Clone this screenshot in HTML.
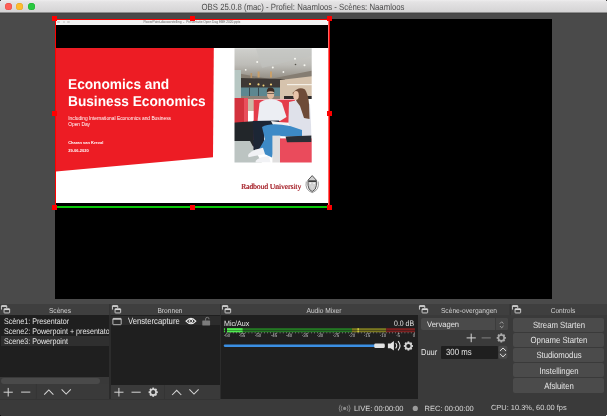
<!DOCTYPE html>
<html><head><meta charset="utf-8">
<style>
*{box-sizing:border-box;margin:0;padding:0}
html,body{width:607px;height:416px;overflow:hidden;background:#4a4a4a;font-family:"Liberation Sans",sans-serif;}
#root{position:absolute;left:0;top:0;width:607px;height:416px;will-change:transform}
.r{position:absolute}
.t{position:absolute;white-space:pre;text-rendering:geometricPrecision}
.h{text-rendering:optimizeLegibility}
</style></head><body><div id="root">
<div class="r" style="left:0px;top:0px;width:607px;height:12.7px;background:linear-gradient(#eeedee,#e4e3e4 15%,#d3d2d3);"></div>
<div class="r" style="left:0px;top:12.4px;width:607px;height:0.6px;background:#8e8e8e;"></div>
<div class="r" style="left:0px;top:13.0px;width:607px;height:0.8px;background:#454545;"></div>
<div class="r" style="left:4.800000000000001px;top:2.8px;width:7.2px;height:7.2px;border-radius:50%;background:#fe5f57;box-shadow:inset 0 0 0 0.4px #e0443e"></div>
<div class="r" style="left:16.2px;top:2.8px;width:7.2px;height:7.2px;border-radius:50%;background:#febc2e;box-shadow:inset 0 0 0 0.4px #dea123"></div>
<div class="r" style="left:27.9px;top:2.8px;width:7.2px;height:7.2px;border-radius:50%;background:#28c840;box-shadow:inset 0 0 0 0.4px #1aab29"></div>
<div class="t" style="left:303.00px;top:1.74px;font-size:9.048px;line-height:10.858px;color:#4b4b4b;font-weight:400;font-family:'Liberation Sans';transform-origin:50% 0;transform:translateX(-50%) scaleX(0.8621);">OBS 25.0.8 (mac) - Profiel: Naamloos - Scènes: Naamloos</div>
<div class="r" style="left:55px;top:19px;width:497px;height:280px;background:#000;"></div>
<div class="r" style="left:56px;top:19.6px;width:272px;height:5px;background:#f3f3f3;"></div>
<div class="r" style="left:57.35px;top:20.7px;width:2.5px;height:2.5px;border-radius:50%;background:#d2d2d2"></div>
<div class="r" style="left:62.55px;top:20.7px;width:2.5px;height:2.5px;border-radius:50%;background:#d2d2d2"></div>
<div class="r" style="left:67.15px;top:20.7px;width:2.5px;height:2.5px;border-radius:50%;background:#d2d2d2"></div>
<div class="t h" style="left:143.40px;top:21.25px;font-size:3.22px;line-height:3.864px;color:#6a6a6a;font-weight:400;font-family:'Liberation Sans';">PowerPoint-diavoorstelling  -  Presentatie Open Dag EBE 2020.pptx</div>
<div class="r" style="left:56px;top:47.9px;width:272px;height:155.1px;background:#fff;"></div>
<svg class="r" style="left:56px;top:47.9px" width="272" height="155" viewBox="0 0 272 155">
<polygon points="0,0 157.8,0 157.0,109.2 0,123.6" fill="#ed1c24"/></svg>
<div class="t" style="left:68.40px;top:77.01px;font-size:14.248px;line-height:17.098px;color:#fff;font-weight:700;font-family:'Liberation Sans';transform-origin:0 0;transform:scaleX(0.9615);">Economics and</div>
<div class="t" style="left:68.40px;top:93.81px;font-size:14.248px;line-height:17.098px;color:#fff;font-weight:700;font-family:'Liberation Sans';transform-origin:0 0;transform:scaleX(0.9615);">Business Economics</div>
<div class="t h" style="left:68.20px;top:116.01px;font-size:4.85px;line-height:5.82px;color:#fff;font-weight:400;font-family:'Liberation Sans';">Including International Economics and Business</div>
<div class="t h" style="left:68.20px;top:121.81px;font-size:4.85px;line-height:5.82px;color:#fff;font-weight:400;font-family:'Liberation Sans';">Open Day</div>
<div class="t h" style="left:68.20px;top:141.41px;font-size:4.0px;line-height:4.8px;color:#fff;font-weight:700;font-family:'Liberation Sans';">Charan van Kreval</div>
<div class="t h" style="left:68.20px;top:148.51px;font-size:4.0px;line-height:4.8px;color:#fff;font-weight:700;font-family:'Liberation Sans';">29-06-2020</div>
<svg class="r" style="left:0;top:0" width="607" height="416" viewBox="0 0 607 416">
  <defs><filter id="bl" x="-10%" y="-10%" width="120%" height="120%"><feGaussianBlur stdDeviation="0.6"/></filter>
  <clipPath id="pc"><rect x="234.5" y="48.2" width="77.2" height="114.4"/></clipPath></defs>
  <g clip-path="url(#pc)"><g filter="url(#bl)">
  <!-- ceiling -->
  <defs><linearGradient id="ceil" x1="0" y1="0" x2="0" y2="1">
    <stop offset="0" stop-color="#d3d4d1"/><stop offset="0.55" stop-color="#bdbcb7"/><stop offset="1" stop-color="#8d877d"/></linearGradient></defs>
  <rect x="230" y="45" width="85" height="36" fill="url(#ceil)"/>
  <polygon points="255,45 315,45 315,55 262,68" fill="#c2c3bf" opacity="0.6"/>
  <polygon points="230,72 270,79 315,70 315,81 270,83 230,82" fill="#857d72"/>
  <circle cx="257.2" cy="61.9" r="1" fill="#f6f6f0"/><circle cx="295" cy="58.7" r="1" fill="#f6f6f0"/>
  <circle cx="304.5" cy="65.2" r="1" fill="#f6f6f0"/><circle cx="272.8" cy="67.6" r="1" fill="#f6f6f0"/>
  <circle cx="245.7" cy="69.8" r="0.9" fill="#f6f6f0"/><circle cx="283.4" cy="72" r="0.9" fill="#f6f6f0"/>
  <circle cx="295.5" cy="64.5" r="0.8" fill="#55524c"/>
  <rect x="257.6" y="71.5" width="2" height="6" fill="#c9a06a"/><rect x="270" y="71.5" width="2" height="6" fill="#c9a06a"/><rect x="250.5" y="73" width="1.6" height="5" fill="#b99466"/>
  <!-- dark band -->
  <polygon points="240,78 285,79 285,88 240,88" fill="#3d3934"/>
  <circle cx="250" cy="84" r="1.1" fill="#f2d27c"/><circle cx="258.5" cy="84.4" r="1.1" fill="#f2d27c"/>
  <circle cx="263.5" cy="85.5" r="1" fill="#f2d27c"/><circle cx="271" cy="84.5" r="1.1" fill="#f2d27c"/>
  <!-- windows -->
  <rect x="240" y="87.5" width="42" height="11" fill="#5d8790"/>
  <rect x="249" y="87.5" width="0.9" height="11" fill="#34434a"/><rect x="258" y="87.5" width="0.9" height="11" fill="#34434a"/><rect x="268" y="87.5" width="0.9" height="11" fill="#34434a"/>
  <rect x="240" y="96" width="42" height="3" fill="#8c8277"/>
  <!-- left column -->
  <rect x="230" y="70" width="11" height="30" fill="#b7c7c3"/>
  <!-- right beige wall -->
  <polygon points="280,80 315,76 315,99 280,99" fill="#d6c3ad"/>
  <rect x="287" y="84" width="28" height="1.2" fill="#f4efe6"/>
  <rect x="284" y="96" width="31" height="3" fill="#2e2b2b"/>
  <!-- left red chair -->
  <rect x="230" y="98" width="18" height="26" fill="#d3303c"/>
  <rect x="244" y="98" width="4" height="25" fill="#e9505c"/>
  <rect x="248" y="99" width="6" height="12" fill="#cbb9a6"/>
  <!-- dark floor under chair -->
  <polygon points="230,123 256,121 262,146 230,148" fill="#24262b"/>
  <!-- floor light -->
  <polygon points="230,141 250,141 262,163 230,163" fill="#bcc4c2"/>
  <!-- man's sofa back -->
  <rect x="253.7" y="99.6" width="41.5" height="23" fill="#e43d4b"/>
  <rect x="253.7" y="120" width="8" height="20" fill="#d8343f"/>
  <!-- man's shirt -->
  <path d="M257.5,121.6 L259.5,103 Q263,99.5 270.6,99 Q278,99.5 282,103 L286.5,117 L280,121 Z" fill="#eceef3"/>
  <!-- man's head -->
  <ellipse cx="270.6" cy="94.6" rx="3.6" ry="4.6" fill="#e0b89c"/>
  <path d="M266.8,92.2 Q266.6,87.6 270.6,87.6 Q274.6,87.6 274.4,92.2 Q270.6,90.4 266.8,92.2Z" fill="#3b2b22"/>
  <rect x="267.2" y="93.4" width="6.8" height="0.6" fill="#2a2a2a"/>
  <!-- man's pants -->
  <path d="M252.8,121 L279,120.6 L281,127 L265,131 L263,150 L253.5,150 Z" fill="#1f2536"/>
  <!-- woman's shirt -->
  <path d="M289,102 L300,99.6 L310,104 L311.5,135.6 L297,136 L288.4,124 Z" fill="#dfe1ea"/>
  <!-- woman's hair -->
  <path d="M292.5,93 Q299,85.6 305,89.5 Q308.5,95 309,104 L309.5,119 L304,118 L300,106 L297,102 Z" fill="#6e4c37"/>
  <ellipse cx="296" cy="95.5" rx="2.8" ry="4.4" fill="#e8c3aa"/>
  <!-- paper -->
  <polygon points="271,121 287,123 289,127 273,125" fill="#f2f2f2"/>
  <!-- jeans -->
  <path d="M262,127 Q270,122 290,126 L302,130 L302,137 L278,136 L272,157.5 L258,151 L265,139 Z" fill="#3d8ac6"/>
  <!-- sofa seat (white/gray) -->
  <rect x="272.4" y="135.6" width="8" height="28" fill="#e0dfdf"/>
  <!-- front red sofa -->
  <rect x="280" y="138.4" width="33" height="25" fill="#ea4c5c"/>
  <!-- laptop -->
  <polygon points="285.6,136.5 311.5,135.6 311.5,142 287,142.3" fill="#2a2d35"/>
  <!-- shoes -->
  <path d="M248,155 Q251,150 263,147.8 L265,154 L248.5,157.2 Z" fill="#f1f2f5"/>
  <path d="M255.6,161 Q258,157 269,156.3 L270.6,162.6 L255.6,162.6 Z" fill="#f1f2f5"/>
  </g></g>
</svg>

<div class="t" style="left:241.20px;top:181.60px;font-size:7.823px;line-height:9.387px;color:#a82830;font-weight:400;font-family:'Liberation Serif';transform-origin:0 0;transform:scaleX(0.9524);text-shadow:0.4px 0 0 #a82830;">Radboud University</div>
<svg class="r" style="left:0;top:0" width="607" height="416">
  <path d="M312.2,175.6 L316.4,180.2 L316.4,185.4 Q316.2,189.8 312.2,191.6 Q308.2,189.8 308,185.4 L308,180.2 Z" fill="#cfcfcf" stroke="#303030" stroke-width="0.8"/>
  <rect x="308.4" y="180.4" width="7.6" height="1.5" fill="#2e2e2e"/>
  <circle cx="310.3" cy="183.3" r="0.9" fill="#f4f4f4"/><circle cx="314.1" cy="183.3" r="0.9" fill="#f4f4f4"/>
  <path d="M310.6,185.5 L313.8,185.5 L312.2,189.5 Z" fill="#d8d8d8"/>
  <path d="M306.3,181.5 Q304.6,190 312.2,192.6 Q319.8,190 318.1,181.5" fill="none" stroke="#555" stroke-width="0.6"/>
</svg>
<div class="r" style="left:55px;top:19px;width:1px;height:188px;background:#ff0000;"></div>
<div class="r" style="left:327.6px;top:19px;width:2.4px;height:188px;background:linear-gradient(to right, #ffd0d0, #ff5050 30%, #ff0000 60%, #d80000);"></div>
<div class="r" style="left:55px;top:19px;width:275px;height:1px;background:#ff0000;"></div>
<div class="r" style="left:56px;top:206.3px;width:273px;height:1.5px;background:#08c808;"></div>
<div class="r" style="left:52.3px;top:16.4px;width:4.7px;height:4.7px;background:#ff0000;"></div>
<div class="r" style="left:52.3px;top:110.9px;width:4.7px;height:4.7px;background:#ff0000;"></div>
<div class="r" style="left:52.3px;top:204.9px;width:4.7px;height:4.7px;background:#ff0000;"></div>
<div class="r" style="left:190.1px;top:16.4px;width:4.7px;height:4.7px;background:#ff0000;"></div>
<div class="r" style="left:190.1px;top:204.9px;width:4.7px;height:4.7px;background:#ff0000;"></div>
<div class="r" style="left:327.4px;top:16.4px;width:4.7px;height:4.7px;background:#ff0000;"></div>
<div class="r" style="left:327.4px;top:110.9px;width:4.7px;height:4.7px;background:#ff0000;"></div>
<div class="r" style="left:327.4px;top:204.9px;width:4.7px;height:4.7px;background:#ff0000;"></div>
<svg width="0" height="0" style="position:absolute"><defs>
<g id="dockicon">
  <path d="M1.45,5.6 L1.45,2.1 Q1.45,1.65 1.9,1.65 L6.3,1.65 Q6.75,1.65 6.75,2.1 L6.75,4.2" fill="none" stroke="#d8d8d8" stroke-width="0.9"/>
  <rect x="1.45" y="1.65" width="5.3" height="1.2" fill="#d8d8d8"/>
  <rect x="4.05" y="4.75" width="5.6" height="4.2" rx="0.6" fill="#3e3e3e" stroke="#d8d8d8" stroke-width="0.9"/>
  <rect x="4.05" y="4.75" width="5.6" height="1.3" fill="#d8d8d8"/>
</g>
<g id="plus"><rect x="-4.6" y="-0.5" width="9.2" height="1" fill="#d4d4d4"/><rect x="-0.5" y="-4.3" width="1" height="8.6" fill="#d4d4d4"/></g>
<g id="minus"><rect x="-4.6" y="-0.5" width="9.2" height="1" fill="#d4d4d4"/></g>
<g id="up"><path d="M-4.6,2.8 L0,-1.9 L4.6,2.8" fill="none" stroke="#d4d4d4" stroke-width="1.05"/></g>
<g id="down"><path d="M-4.6,-2.8 L0,1.9 L4.6,-2.8" fill="none" stroke="#d4d4d4" stroke-width="1.05"/></g>
<g id="gear"><circle r="2.9" fill="none" stroke="#d4d4d4" stroke-width="1.6"/>
  <g fill="#d4d4d4"><rect x="-0.9" y="-4.6" width="1.8" height="2"/><rect x="-0.9" y="2.6" width="1.8" height="2"/><rect x="-4.6" y="-0.9" width="2" height="1.8"/><rect x="2.6" y="-0.9" width="2" height="1.8"/>
  <g transform="rotate(45)"><rect x="-0.9" y="-4.6" width="1.8" height="2"/><rect x="-0.9" y="2.6" width="1.8" height="2"/><rect x="-4.6" y="-0.9" width="2" height="1.8"/><rect x="2.6" y="-0.9" width="2" height="1.8"/></g></g></g>
</defs></svg>
<div class="r" style="left:0px;top:304px;width:607px;height:95.6px;background:#3a3a3a;"></div>
<div class="r" style="left:109.3px;top:304px;width:1.2px;height:11.4px;background:#353535;"></div>
<div class="r" style="left:220.0px;top:304px;width:1.2px;height:11.4px;background:#353535;"></div>
<div class="r" style="left:417.9px;top:304px;width:1.2px;height:11.4px;background:#353535;"></div>
<div class="r" style="left:509.6px;top:304px;width:1.2px;height:11.4px;background:#353535;"></div>
<div class="r" style="left:109.3px;top:315.4px;width:1.3px;height:84px;background:#2c2c2c;"></div>
<div class="r" style="left:219.7px;top:315.4px;width:1.4px;height:84px;background:#2c2c2c;"></div>
<div class="r" style="left:0px;top:304px;width:109.3px;height:95.6px;background:#3a3a3a;"></div>
<div class="r" style="left:0px;top:304px;width:109.3px;height:11.4px;background:#3f3f3f;"></div>
<svg class="r" style="left:0px;top:304px" width="12" height="11"><use href="#dockicon"/></svg>
<div class="t" style="left:59.80px;top:306.60px;font-size:7.182px;line-height:8.618px;color:#d0d0d0;font-weight:400;font-family:'Liberation Sans';transform-origin:50% 0;transform:translateX(-50%) scaleX(0.9259);">Scènes</div>
<div class="r" style="left:110.6px;top:304px;width:109.1px;height:95.6px;background:#3a3a3a;"></div>
<div class="r" style="left:110.6px;top:304px;width:109.1px;height:11.4px;background:#3f3f3f;"></div>
<svg class="r" style="left:110.6px;top:304px" width="12" height="11"><use href="#dockicon"/></svg>
<div class="t" style="left:170.30px;top:306.60px;font-size:7.182px;line-height:8.618px;color:#d0d0d0;font-weight:400;font-family:'Liberation Sans';transform-origin:50% 0;transform:translateX(-50%) scaleX(0.9259);">Bronnen</div>
<div class="r" style="left:221.1px;top:304px;width:196.7px;height:95.6px;background:#3a3a3a;"></div>
<div class="r" style="left:221.1px;top:304px;width:196.7px;height:11.4px;background:#3f3f3f;"></div>
<svg class="r" style="left:221.1px;top:304px" width="12" height="11"><use href="#dockicon"/></svg>
<div class="t" style="left:323.90px;top:306.60px;font-size:7.182px;line-height:8.618px;color:#d0d0d0;font-weight:400;font-family:'Liberation Sans';transform-origin:50% 0;transform:translateX(-50%) scaleX(0.9259);">Audio Mixer</div>
<div class="r" style="left:418.2px;top:304px;width:90.6px;height:95.6px;background:#3a3a3a;"></div>
<div class="r" style="left:418.2px;top:304px;width:90.6px;height:11.4px;background:#3f3f3f;"></div>
<svg class="r" style="left:418.2px;top:304px" width="12" height="11"><use href="#dockicon"/></svg>
<div class="t" style="left:468.80px;top:306.60px;font-size:7.182px;line-height:8.618px;color:#d0d0d0;font-weight:400;font-family:'Liberation Sans';transform-origin:50% 0;transform:translateX(-50%) scaleX(0.9259);">Scène-overgangen</div>
<div class="r" style="left:511.0px;top:304px;width:96.0px;height:95.6px;background:#3a3a3a;"></div>
<div class="r" style="left:511.0px;top:304px;width:96.0px;height:11.4px;background:#3f3f3f;"></div>
<svg class="r" style="left:511.0px;top:304px" width="12" height="11"><use href="#dockicon"/></svg>
<div class="t" style="left:563.30px;top:306.60px;font-size:7.182px;line-height:8.618px;color:#d0d0d0;font-weight:400;font-family:'Liberation Sans';transform-origin:50% 0;transform:translateX(-50%) scaleX(0.9259);">Controls</div>
<div class="r" style="left:0px;top:315.4px;width:109.3px;height:61.6px;background:#1f1f1f;"></div>
<div class="r" style="left:1.2px;top:335.9px;width:108.1px;height:9.9px;background:#2f2f2f;"></div>
<div class="t" style="left:3.90px;top:317.45px;font-size:8.294px;line-height:9.953px;color:#e6e6e6;font-weight:400;font-family:'Liberation Sans';transform-origin:0 0;transform:scaleX(0.8621);">Scène1: Presentator</div>
<div class="t" style="left:3.90px;top:327.25px;font-size:8.294px;line-height:9.953px;color:#e6e6e6;font-weight:400;font-family:'Liberation Sans';transform-origin:0 0;transform:scaleX(0.8621);width:122.26px;overflow:hidden;">Scene2: Powerpoint + presentator</div>
<div class="t" style="left:3.90px;top:337.05px;font-size:8.294px;line-height:9.953px;color:#e6e6e6;font-weight:400;font-family:'Liberation Sans';transform-origin:0 0;transform:scaleX(0.8621);">Scene3: Powerpoint</div>
<div class="r" style="left:0px;top:377px;width:109.3px;height:7.2px;background:#393939;"></div>
<div class="r" style="left:1.3px;top:377.6px;width:98.8px;height:6.0px;background:#4a4a4a;border-radius:3px;"></div>
<svg class="r" style="left:0;top:384px" width="109" height="15">
  <use href="#plus" x="8.2" y="8.2"/><use href="#minus" x="25.7" y="8.1"/>
  <rect x="35.9" y="0" width="0.7" height="14.7" fill="#333"/>
  <use href="#up" x="48.8" y="7.9"/><use href="#down" x="66.2" y="8.2"/>
</svg>
<div class="r" style="left:110.6px;top:315.4px;width:109.1px;height:69.5px;background:#1f1f1f;"></div>
<div class="r" style="left:110.6px;top:315.5px;width:109.1px;height:9.4px;background:#2c2c2c;"></div>
<svg class="r" style="left:110.6px;top:315.5px" width="110" height="10">
  <rect x="1.9" y="2.4" width="8.3" height="6.3" rx="0.6" fill="none" stroke="#d0d0d0" stroke-width="0.85"/>
  <rect x="1.9" y="2.4" width="8.3" height="1.3" fill="#d0d0d0"/>
  <path d="M75.0,5.1 Q80,-0.3 84.8,5.1 Q80,10.5 75.0,5.1Z" fill="none" stroke="#ececec" stroke-width="1.1"/>
  <circle cx="79.9" cy="5.1" r="1.75" fill="none" stroke="#ececec" stroke-width="1.0"/>
  <circle cx="79.9" cy="5.0" r="0.5" fill="#ececec"/>
  <path d="M94.6,4.8 L94.6,3.0 Q94.6,1.3 96.3,1.3 Q98.0,1.3 98.0,3.0 L98.0,3.3" fill="none" stroke="#7c7c7c" stroke-width="0.95"/>
  <rect x="91.3" y="4.5" width="7.8" height="5.0" rx="0.4" fill="#7c7c7c"/>
</svg>
<div class="t" style="left:128.30px;top:316.15px;font-size:8.932px;line-height:10.718px;color:#e6e6e6;font-weight:400;font-family:'Liberation Sans';transform-origin:0 0;transform:scaleX(0.8621);width:59.62px;overflow:hidden;">Venstercapture</div>
<svg class="r" style="left:110.6px;top:384.9px" width="110" height="15">
  <use href="#plus" x="7.9" y="7.2"/><use href="#minus" x="25.1" y="7.2"/><use href="#gear" x="42.2" y="7.2"/>
  <rect x="53.2" y="0" width="0.7" height="14.5" fill="#333"/>
  <use href="#up" x="65.7" y="7.2"/><use href="#down" x="83.0" y="7.2"/>
</svg>
<div class="r" style="left:221.1px;top:315.4px;width:196.7px;height:84.2px;background:#1f1f1f;"></div>
<div class="t" style="left:224.00px;top:318.79px;font-size:7.508px;line-height:9.009px;color:#e6e6e6;font-weight:400;font-family:'Liberation Sans';transform-origin:0 0;transform:scaleX(0.9524);">Mic/Aux</div>
<div class="t" style="left:414.30px;top:318.62px;font-size:8.004px;line-height:9.605px;color:#e6e6e6;font-weight:400;font-family:'Liberation Sans';transform-origin:100% 0;transform:translateX(-100%) scaleX(0.8621);">0.0 dB</div>
<svg class="r" style="left:0;top:0" width="607" height="416">
<rect x="227.0" y="328.2" width="124.87" height="2.0" fill="#237823"/><rect x="351.87" y="328.2" width="34.34" height="2.0" fill="#7b7820"/><rect x="386.21" y="328.2" width="28.69" height="2.0" fill="#7d2020"/><rect x="227.0" y="328.2" width="15.6" height="2.0" fill="#4feb4f"/><rect x="223.9" y="328.2" width="1.2" height="2.0" fill="#3fcf3f"/><rect x="357.6" y="328.2" width="1.1" height="2.0" fill="#f2ec44"/>
<rect x="227.0" y="330.6" width="124.87" height="1.7" fill="#237823"/><rect x="351.87" y="330.6" width="34.34" height="1.7" fill="#7b7820"/><rect x="386.21" y="330.6" width="28.69" height="1.7" fill="#7d2020"/><rect x="227.0" y="330.6" width="15.6" height="1.7" fill="#4feb4f"/><rect x="223.9" y="330.6" width="1.2" height="1.7" fill="#3fcf3f"/><rect x="357.6" y="330.6" width="1.1" height="1.7" fill="#f2ec44"/>
<rect x="226.70" y="332.4" width="0.6" height="1.3" fill="#c8c8c8"/>
<rect x="229.82" y="332.4" width="0.6" height="0.9" fill="#c8c8c8"/>
<rect x="232.94" y="332.4" width="0.6" height="0.9" fill="#c8c8c8"/>
<rect x="236.06" y="332.4" width="0.6" height="0.9" fill="#c8c8c8"/>
<rect x="239.19" y="332.4" width="0.6" height="0.9" fill="#c8c8c8"/>
<rect x="242.31" y="332.4" width="0.6" height="1.3" fill="#c8c8c8"/>
<rect x="245.43" y="332.4" width="0.6" height="0.9" fill="#c8c8c8"/>
<rect x="248.55" y="332.4" width="0.6" height="0.9" fill="#c8c8c8"/>
<rect x="251.67" y="332.4" width="0.6" height="0.9" fill="#c8c8c8"/>
<rect x="254.79" y="332.4" width="0.6" height="0.9" fill="#c8c8c8"/>
<rect x="257.92" y="332.4" width="0.6" height="1.3" fill="#c8c8c8"/>
<rect x="261.04" y="332.4" width="0.6" height="0.9" fill="#c8c8c8"/>
<rect x="264.16" y="332.4" width="0.6" height="0.9" fill="#c8c8c8"/>
<rect x="267.28" y="332.4" width="0.6" height="0.9" fill="#c8c8c8"/>
<rect x="270.40" y="332.4" width="0.6" height="0.9" fill="#c8c8c8"/>
<rect x="273.52" y="332.4" width="0.6" height="1.3" fill="#c8c8c8"/>
<rect x="276.65" y="332.4" width="0.6" height="0.9" fill="#c8c8c8"/>
<rect x="279.77" y="332.4" width="0.6" height="0.9" fill="#c8c8c8"/>
<rect x="282.89" y="332.4" width="0.6" height="0.9" fill="#c8c8c8"/>
<rect x="286.01" y="332.4" width="0.6" height="0.9" fill="#c8c8c8"/>
<rect x="289.13" y="332.4" width="0.6" height="1.3" fill="#c8c8c8"/>
<rect x="292.25" y="332.4" width="0.6" height="0.9" fill="#c8c8c8"/>
<rect x="295.38" y="332.4" width="0.6" height="0.9" fill="#c8c8c8"/>
<rect x="298.50" y="332.4" width="0.6" height="0.9" fill="#c8c8c8"/>
<rect x="301.62" y="332.4" width="0.6" height="0.9" fill="#c8c8c8"/>
<rect x="304.74" y="332.4" width="0.6" height="1.3" fill="#c8c8c8"/>
<rect x="307.86" y="332.4" width="0.6" height="0.9" fill="#c8c8c8"/>
<rect x="310.99" y="332.4" width="0.6" height="0.9" fill="#c8c8c8"/>
<rect x="314.11" y="332.4" width="0.6" height="0.9" fill="#c8c8c8"/>
<rect x="317.23" y="332.4" width="0.6" height="0.9" fill="#c8c8c8"/>
<rect x="320.35" y="332.4" width="0.6" height="1.3" fill="#c8c8c8"/>
<rect x="323.47" y="332.4" width="0.6" height="0.9" fill="#c8c8c8"/>
<rect x="326.59" y="332.4" width="0.6" height="0.9" fill="#c8c8c8"/>
<rect x="329.71" y="332.4" width="0.6" height="0.9" fill="#c8c8c8"/>
<rect x="332.84" y="332.4" width="0.6" height="0.9" fill="#c8c8c8"/>
<rect x="335.96" y="332.4" width="0.6" height="1.3" fill="#c8c8c8"/>
<rect x="339.08" y="332.4" width="0.6" height="0.9" fill="#c8c8c8"/>
<rect x="342.20" y="332.4" width="0.6" height="0.9" fill="#c8c8c8"/>
<rect x="345.32" y="332.4" width="0.6" height="0.9" fill="#c8c8c8"/>
<rect x="348.44" y="332.4" width="0.6" height="0.9" fill="#c8c8c8"/>
<rect x="351.57" y="332.4" width="0.6" height="1.3" fill="#c8c8c8"/>
<rect x="354.69" y="332.4" width="0.6" height="0.9" fill="#c8c8c8"/>
<rect x="357.81" y="332.4" width="0.6" height="0.9" fill="#c8c8c8"/>
<rect x="360.93" y="332.4" width="0.6" height="0.9" fill="#c8c8c8"/>
<rect x="364.05" y="332.4" width="0.6" height="0.9" fill="#c8c8c8"/>
<rect x="367.18" y="332.4" width="0.6" height="1.3" fill="#c8c8c8"/>
<rect x="370.30" y="332.4" width="0.6" height="0.9" fill="#c8c8c8"/>
<rect x="373.42" y="332.4" width="0.6" height="0.9" fill="#c8c8c8"/>
<rect x="376.54" y="332.4" width="0.6" height="0.9" fill="#c8c8c8"/>
<rect x="379.66" y="332.4" width="0.6" height="0.9" fill="#c8c8c8"/>
<rect x="382.78" y="332.4" width="0.6" height="1.3" fill="#c8c8c8"/>
<rect x="385.91" y="332.4" width="0.6" height="0.9" fill="#c8c8c8"/>
<rect x="389.03" y="332.4" width="0.6" height="0.9" fill="#c8c8c8"/>
<rect x="392.15" y="332.4" width="0.6" height="0.9" fill="#c8c8c8"/>
<rect x="395.27" y="332.4" width="0.6" height="0.9" fill="#c8c8c8"/>
<rect x="398.39" y="332.4" width="0.6" height="1.3" fill="#c8c8c8"/>
<rect x="401.51" y="332.4" width="0.6" height="0.9" fill="#c8c8c8"/>
<rect x="404.64" y="332.4" width="0.6" height="0.9" fill="#c8c8c8"/>
<rect x="407.76" y="332.4" width="0.6" height="0.9" fill="#c8c8c8"/>
<rect x="410.88" y="332.4" width="0.6" height="0.9" fill="#c8c8c8"/>
<rect x="414.00" y="332.4" width="0.6" height="1.3" fill="#c8c8c8"/>
<rect x="223.7" y="344.6" width="153" height="2.3" rx="1.15" fill="#3b8fe3"/>
<rect x="374.2" y="343.5" width="10.6" height="4.6" rx="1.4" fill="#e2e2e2"/>
<path d="M387.9,343.5 L390.6,343.5 L393.9,341.1 L393.9,350.5 L390.6,348.2 L387.9,348.2 Z" fill="#e4e4e4"/>
<path d="M395.6,343.2 Q397.9,345.8 395.6,348.4" fill="none" stroke="#e4e4e4" stroke-width="1.1"/>
<path d="M398.1,341.2 Q401.9,345.8 398.1,350.4" fill="none" stroke="#e4e4e4" stroke-width="1.1"/>
<use href="#gear" x="408.4" y="346"/>
</svg>
<div class="t" style="left:226.70px;top:333.11px;font-size:5.06px;line-height:6.072px;color:#c8c8c8;font-weight:400;font-family:'Liberation Sans';transform-origin:50% 0;transform:translateX(-50%) scaleX(0.8696);">-60</div>
<div class="t" style="left:242.31px;top:333.11px;font-size:5.06px;line-height:6.072px;color:#c8c8c8;font-weight:400;font-family:'Liberation Sans';transform-origin:50% 0;transform:translateX(-50%) scaleX(0.8696);">-55</div>
<div class="t" style="left:257.92px;top:333.11px;font-size:5.06px;line-height:6.072px;color:#c8c8c8;font-weight:400;font-family:'Liberation Sans';transform-origin:50% 0;transform:translateX(-50%) scaleX(0.8696);">-50</div>
<div class="t" style="left:273.52px;top:333.11px;font-size:5.06px;line-height:6.072px;color:#c8c8c8;font-weight:400;font-family:'Liberation Sans';transform-origin:50% 0;transform:translateX(-50%) scaleX(0.8696);">-45</div>
<div class="t" style="left:289.13px;top:333.11px;font-size:5.06px;line-height:6.072px;color:#c8c8c8;font-weight:400;font-family:'Liberation Sans';transform-origin:50% 0;transform:translateX(-50%) scaleX(0.8696);">-40</div>
<div class="t" style="left:304.74px;top:333.11px;font-size:5.06px;line-height:6.072px;color:#c8c8c8;font-weight:400;font-family:'Liberation Sans';transform-origin:50% 0;transform:translateX(-50%) scaleX(0.8696);">-35</div>
<div class="t" style="left:320.35px;top:333.11px;font-size:5.06px;line-height:6.072px;color:#c8c8c8;font-weight:400;font-family:'Liberation Sans';transform-origin:50% 0;transform:translateX(-50%) scaleX(0.8696);">-30</div>
<div class="t" style="left:335.96px;top:333.11px;font-size:5.06px;line-height:6.072px;color:#c8c8c8;font-weight:400;font-family:'Liberation Sans';transform-origin:50% 0;transform:translateX(-50%) scaleX(0.8696);">-25</div>
<div class="t" style="left:351.57px;top:333.11px;font-size:5.06px;line-height:6.072px;color:#c8c8c8;font-weight:400;font-family:'Liberation Sans';transform-origin:50% 0;transform:translateX(-50%) scaleX(0.8696);">-20</div>
<div class="t" style="left:367.18px;top:333.11px;font-size:5.06px;line-height:6.072px;color:#c8c8c8;font-weight:400;font-family:'Liberation Sans';transform-origin:50% 0;transform:translateX(-50%) scaleX(0.8696);">-15</div>
<div class="t" style="left:382.78px;top:333.11px;font-size:5.06px;line-height:6.072px;color:#c8c8c8;font-weight:400;font-family:'Liberation Sans';transform-origin:50% 0;transform:translateX(-50%) scaleX(0.8696);">-10</div>
<div class="t" style="left:398.39px;top:333.11px;font-size:5.06px;line-height:6.072px;color:#c8c8c8;font-weight:400;font-family:'Liberation Sans';transform-origin:50% 0;transform:translateX(-50%) scaleX(0.8696);">-5</div>
<div class="t" style="left:414.00px;top:333.11px;font-size:5.06px;line-height:6.072px;color:#c8c8c8;font-weight:400;font-family:'Liberation Sans';transform-origin:50% 0;transform:translateX(-50%) scaleX(0.8696);">0</div>
<div class="r" style="left:420.9px;top:317.9px;width:86.8px;height:12.5px;background:#4a4a4a;border-radius:2px;"></div>
<div class="r" style="left:495.3px;top:317.9px;width:12.4px;height:12.5px;background:#474747;border-radius:0 2px 2px 0;border-left:0.5px solid #3c3c3c;"></div>
<div class="t" style="left:426.90px;top:320.28px;font-size:8.056px;line-height:9.667px;color:#e6e6e6;font-weight:400;font-family:'Liberation Sans';transform-origin:0 0;transform:scaleX(0.9434);">Vervagen</div>
<svg class="r" style="left:0;top:0" width="607" height="416">
  <path d="M499.9,323.6 L501.7,321.8 L503.5,323.6 M499.9,326.0 L501.7,327.8 L503.5,326.0" fill="none" stroke="#b8b8b8" stroke-width="0.8"/>
  <use href="#plus" x="471.2" y="337.9"/>
  <g opacity="0.45"><use href="#minus" x="486.2" y="337.9"/></g>
  <g opacity="0.72"><use href="#gear" x="501.3" y="337.9"/></g>
  <rect x="498.6" y="345.8" width="8.8" height="6.3" rx="1.6" fill="#4a4a4a"/>
  <rect x="498.6" y="352.4" width="8.8" height="6.3" rx="1.6" fill="#4a4a4a"/>
  <path d="M500.0,350.9 L503.0,348.0 L506.0,350.9 M500.0,353.9 L503.0,356.8 L506.0,353.9" fill="none" stroke="#e2e2e2" stroke-width="1.0"/>
</svg>
<div class="r" style="left:440.9px;top:346.0px;width:57.4px;height:12.9px;background:#1f1f1f;border-radius:1px;"></div>
<div class="t" style="left:421.00px;top:346.57px;font-size:8.7px;line-height:10.44px;color:#e6e6e6;font-weight:400;font-family:'Liberation Sans';transform-origin:0 0;transform:scaleX(0.8621);">Duur</div>
<div class="t" style="left:445.90px;top:346.84px;font-size:9.048px;line-height:10.858px;color:#e6e6e6;font-weight:400;font-family:'Liberation Sans';transform-origin:0 0;transform:scaleX(0.8621);">300 ms</div>
<div class="r" style="left:512.8px;top:317.6px;width:91.4px;height:14.2px;background:#4b4b4b;border-radius:2px;"></div>
<div class="t" style="left:558.60px;top:319.99px;font-size:8.99px;line-height:10.788px;color:#e6e6e6;font-weight:400;font-family:'Liberation Sans';transform-origin:50% 0;transform:translateX(-50%) scaleX(0.8621);">Stream Starten</div>
<div class="r" style="left:512.8px;top:332.8px;width:91.4px;height:14.2px;background:#4b4b4b;border-radius:2px;"></div>
<div class="t" style="left:558.60px;top:335.19px;font-size:8.99px;line-height:10.788px;color:#e6e6e6;font-weight:400;font-family:'Liberation Sans';transform-origin:50% 0;transform:translateX(-50%) scaleX(0.8621);">Opname Starten</div>
<div class="r" style="left:512.8px;top:348.0px;width:91.4px;height:14.2px;background:#4b4b4b;border-radius:2px;"></div>
<div class="t" style="left:558.60px;top:350.39px;font-size:8.99px;line-height:10.788px;color:#e6e6e6;font-weight:400;font-family:'Liberation Sans';transform-origin:50% 0;transform:translateX(-50%) scaleX(0.8621);">Studiomodus</div>
<div class="r" style="left:512.8px;top:363.20000000000005px;width:91.4px;height:14.2px;background:#4b4b4b;border-radius:2px;"></div>
<div class="t" style="left:558.60px;top:365.59px;font-size:8.99px;line-height:10.788px;color:#e6e6e6;font-weight:400;font-family:'Liberation Sans';transform-origin:50% 0;transform:translateX(-50%) scaleX(0.8621);">Instellingen</div>
<div class="r" style="left:512.8px;top:378.40000000000003px;width:91.4px;height:14.2px;background:#4b4b4b;border-radius:2px;"></div>
<div class="t" style="left:558.60px;top:380.79px;font-size:8.99px;line-height:10.788px;color:#e6e6e6;font-weight:400;font-family:'Liberation Sans';transform-origin:50% 0;transform:translateX(-50%) scaleX(0.8621);">Afsluiten</div>
<div class="r" style="left:0px;top:399.3px;width:607px;height:16.7px;background:#3a3a3a;"></div>
<div class="r" style="left:0px;top:398.9px;width:220px;height:0.8px;background:#343434;"></div>
<svg class="r" style="left:0;top:0" width="607" height="416">
  <circle cx="344.6" cy="408.4" r="1.6" fill="#8c8c8c"/>
  <g fill="none" stroke="#8c8c8c" stroke-width="0.85">
    <path d="M342.0,405.9 Q340.6,408.4 342.0,410.9 M347.2,405.9 Q348.6,408.4 347.2,410.9"/>
    <path d="M340.3,404.8 Q338.1,408.4 340.3,412.0 M348.9,404.8 Q351.1,408.4 348.9,412.0"/>
  </g>
  <circle cx="415.3" cy="408.4" r="2.6" fill="#9c9c9c"/>
</svg>
<div class="t" style="left:353.90px;top:404.20px;font-size:7.5px;line-height:9.0px;color:#d8d8d8;font-weight:400;font-family:'Liberation Sans';">LIVE: 00:00:00</div>
<div class="t" style="left:424.60px;top:404.20px;font-size:7.5px;line-height:9.0px;color:#d8d8d8;font-weight:400;font-family:'Liberation Sans';">REC: 00:00:00</div>
<div class="t" style="left:491.00px;top:404.25px;font-size:7.45px;line-height:8.94px;color:#d8d8d8;font-weight:400;font-family:'Liberation Sans';">CPU: 10.3%, 60.00 fps</div>
<div class="r" style="left:0px;top:0px;width:1px;height:1px;background:#3a3a3a;"></div>
<div class="r" style="left:606px;top:0px;width:1px;height:1px;background:#3a3a3a;"></div>
<div class="r" style="left:0px;top:415px;width:1px;height:1px;background:#101010;"></div>
<div class="r" style="left:606px;top:415px;width:1px;height:1px;background:#f0f0f0;"></div>
</div></body></html>
